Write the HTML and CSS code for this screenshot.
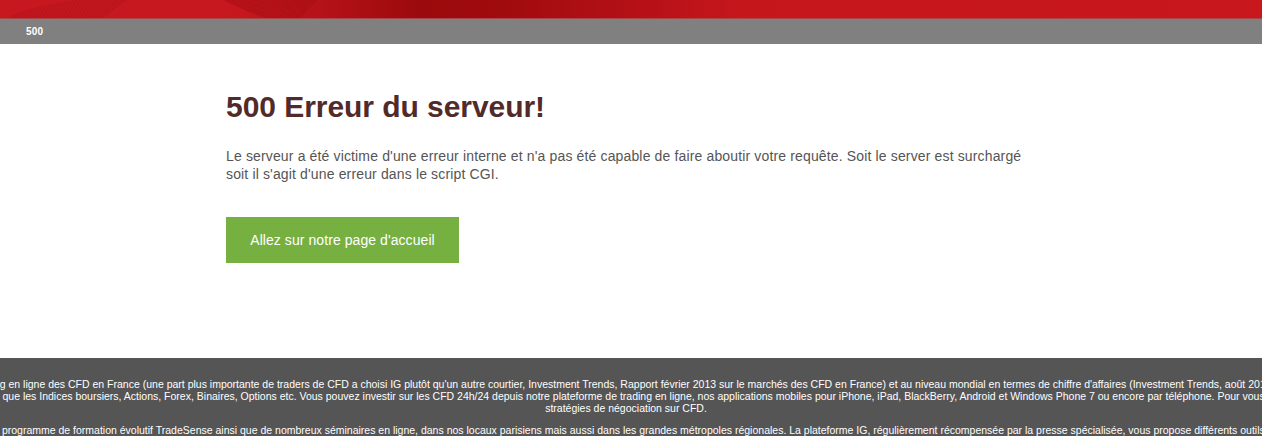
FILE: index.html
```html
<!DOCTYPE html>
<html lang="fr">
<head>
<meta charset="utf-8">
<title>500</title>
<link rel="stylesheet" href="styles.css">
</head>
<body>
<header class="banner">
<svg class="waves" width="420" height="18" viewBox="0 0 420 18" aria-hidden="true">
<defs>
<pattern id="hatch" width="3" height="3" patternUnits="userSpaceOnUse" patternTransform="rotate(30)">
<rect width="1" height="3" fill="#a80e14" opacity=".3"/>
</pattern>
</defs>
<path d="M7 18 C25 9 50 3 77 0 L127 0 L103 18Z" fill="#b9141a" opacity=".45"/>
<path d="M7 18 C25 9 50 3 77 0 L127 0 L103 18Z" fill="url(#hatch)"/>
<path d="M223 0 C238 7 252 14 267 18 L300 18 L317 0Z" fill="#a80f14" opacity=".6"/>
<path d="M235 0 C252 6 268 13 283 18 M250 0 C266 6 279 13 292 18 M270 0 C281 6 288 13 298 18 M290 0 C295 6 298 12 302 18" stroke="#bd151b" stroke-width="1" fill="none" opacity=".6"/>
</svg>
</header>
<nav class="crumb"><span class="crumb-label">500</span></nav>
<main class="content">
<h1 class="title">500 Erreur du serveur!</h1>
<p class="message">Le serveur a été victime d'une erreur interne et n'a pas été capable de faire aboutir votre requête. Soit le server est surchargé<br>soit il s'agit d'une erreur dans le script CGI.</p>
<a class="home" href="#">Allez sur notre page d'accueil</a>
</main>
<footer class="legal">
<div class="legal-inner">
<p class="legal-p">IG est le numéro un du trading en ligne des CFD en France (une part plus importante de traders de CFD a choisi IG plutôt qu'un autre courtier, Investment Trends, Rapport février 2013 sur le marchés des CFD en France) et au niveau mondial en termes de chiffre d'affaires (Investment Trends, août 2013). Nous sommes leaders.<br>Nous proposons de multiples marchés tels que les Indices boursiers, Actions, Forex, Binaires, Options etc. Vous pouvez investir sur les CFD 24h/24 depuis notre plateforme de trading en ligne, nos applications mobiles pour iPhone, iPad, BlackBerry, Android et Windows Phone 7 ou encore par téléphone. Pour vous aider, nous mettons à votre service des<br>stratégies de négociation sur CFD.</p>
<p class="legal-p">Nous proposons un programme de formation évolutif TradeSense ainsi que de nombreux séminaires en ligne, dans nos locaux parisiens mais aussi dans les grandes métropoles régionales. La plateforme IG, régulièrement récompensée par la presse spécialisée, vous propose différents outils de trading IG ici.</p>
</div>
</footer>
</body>
</html>
```
FILE: styles.css
```css
html, body {
  margin: 0;
  padding: 0;
  height: 436px;
  overflow: hidden;
  background: #fff;
  font-family: "Liberation Sans", Arial, sans-serif;
}
.banner {
  height: 18px;
  border-bottom: 1px solid #a8484a;
  background: linear-gradient(90deg, #c8181f 0, #c8181f 225px, #b51219 320px, #9b0a0c 420px, #a00b0e 500px, #b21016 620px, #c5161c 740px, #c8181e 1262px);
  overflow: hidden;
}
.waves { display: block; }
.crumb {
  height: 25px;
  background: #808080;
  display: flex;
  align-items: center;
  padding-left: 26px;
  margin-bottom: 44px;
}
.crumb-label {
  color: #fff;
  font-size: 10px;
  font-weight: 700;
  letter-spacing: .2px;
}
.content {
  height: 270px;
  padding-left: 226px;
}
.title {
  margin: 0 0 21px;
  font-size: 30px;
  line-height: 38px;
  font-weight: 700;
  letter-spacing: -.05px;
  color: #532a2a;
}
.message {
  margin: 0 0 34px;
  font-size: 14px;
  line-height: 18px;
  letter-spacing: .145px;
  color: #555;
}
.home {
  display: inline-block;
  width: 233px;
  height: 46px;
  line-height: 46px;
  text-align: center;
  background: #76b041;
  color: #fff;
  font-size: 14px;
  letter-spacing: .07px;
  text-decoration: none;
}
.legal {
  height: 78px;
  background: #555;
  overflow: hidden;
  display: flex;
  justify-content: center;
  padding-right: 10px;
}
.legal-inner {
  flex: none;
  padding-top: 20px;
}
.legal-p {
  margin: 0 0 10px;
  color: #fff;
  font-size: 10.5px;
  line-height: 12px;
  text-align: center;
  white-space: nowrap;
}
```
